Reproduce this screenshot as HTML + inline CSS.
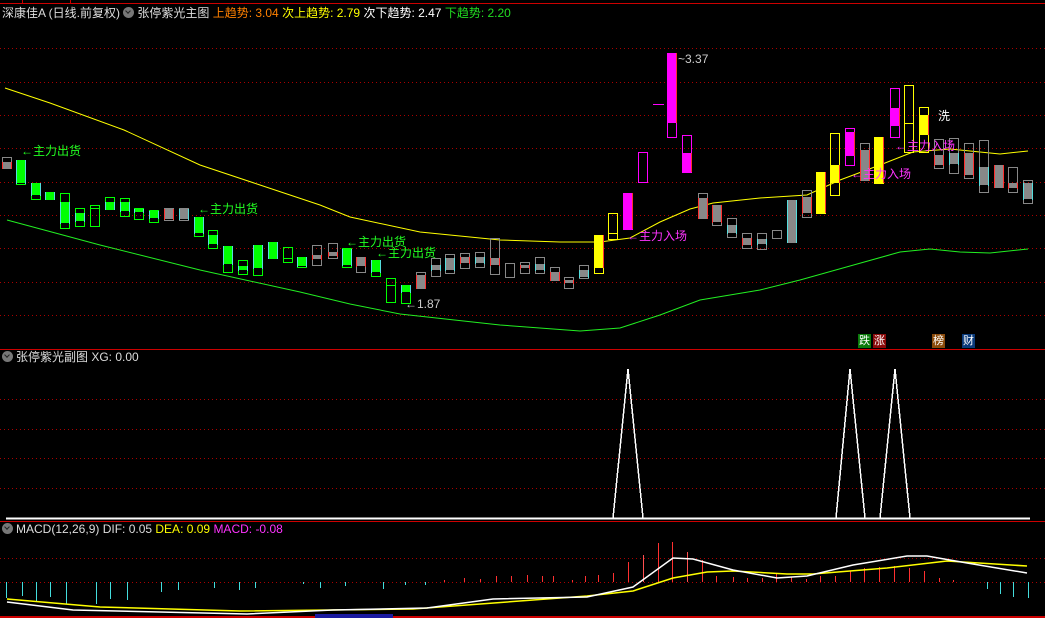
<!DOCTYPE html>
<html><head><meta charset="utf-8"><style>
html,body{margin:0;padding:0;background:#000;width:1045px;height:618px;overflow:hidden;font-family:"Liberation Sans","Noto Sans CJK SC",sans-serif}
svg{position:absolute;left:0;top:0}
.t{position:absolute;font-size:12px;white-space:nowrap;line-height:14px}
.ic{display:inline-block;width:11px;height:11px;border-radius:50%;background:#777;vertical-align:-1px;margin-right:3px;position:relative}
.ic:after{content:"";position:absolute;left:3px;top:2px;width:3px;height:3px;border-right:1.5px solid #222;border-bottom:1.5px solid #222;transform:rotate(45deg)}
.b{position:absolute;font-size:11px;line-height:14px;width:13px;height:14px;text-align:center;color:#fff}
</style></head><body>
<svg id="s" width="1045" height="618" xmlns="http://www.w3.org/2000/svg" shape-rendering="crispEdges"></svg>
<div class="t" style="left:2px;top:6px;color:#ddd">深康佳A (日线.前复权) <span class="ic"></span>张停紫光主图 <span style="color:#ff8000">上趋势: 3.04</span> <span style="color:#ffff00">次上趋势: 2.79</span> <span style="color:#fff">次下趋势: 2.47</span> <span style="color:#22dd22">下趋势: 2.20</span></div>
<div class="t" style="left:2px;top:350px;color:#ddd"><span class="ic"></span>张停紫光副图 XG: 0.00</div>
<div class="t" style="left:2px;top:522px;color:#ddd"><span class="ic"></span>MACD(12,26,9) DIF: 0.05 <span style="color:#ffff00">DEA: 0.09</span> <span style="color:#ff33ff">MACD: -0.08</span></div>
<div class="t" style="left:21px;top:144px;color:#22ff22">←主力出货</div>
<div class="t" style="left:198px;top:202px;color:#22ff22">←主力出货</div>
<div class="t" style="left:346px;top:235px;color:#22ff22">←主力出货</div>
<div class="t" style="left:376px;top:246px;color:#22ff22">←主力出货</div>
<div class="t" style="left:405px;top:297px;color:#ccc">←1.87</div>
<div class="t" style="left:678px;top:52px;color:#ccc">~3.37</div>
<div class="t" style="left:627px;top:229px;color:#ff33ff">←主力入场</div>
<div class="t" style="left:851px;top:167px;color:#ff33ff">←主力入场</div>
<div class="t" style="left:895px;top:139px;color:#ff33ff">←主力入场</div>
<div class="t" style="left:938px;top:109px;color:#fff">洗</div>
<div class="b" style="left:858px;top:334px;background:#0a7a0a">跌</div>
<div class="b" style="left:873px;top:334px;background:#8a0a0a">涨</div>
<div class="b" style="left:932px;top:334px;background:#8a4a0a">榜</div>
<div class="b" style="left:962px;top:334px;background:#0a3a7a">财</div>
<script>
var s=document.getElementById('s'),h='';
function L(x1,y1,x2,y2,c,w,d){h+='<line x1="'+x1+'" y1="'+y1+'" x2="'+x2+'" y2="'+y2+'" stroke="'+c+'" stroke-width="'+(w||1)+'"'+(d?' stroke-dasharray="'+d+'"':'')+'/>';}
function R(x,y,w,hh,f,st){h+='<rect x="'+x+'" y="'+y+'" width="'+w+'" height="'+hh+'" fill="'+f+'"'+(st?' stroke="'+st+'"':'')+'/>';}
function P(pts,c,w){h+='<polyline fill="none" stroke="'+c+'" stroke-width="'+(w||1)+'" points="'+pts.map(function(p){return p.join(',')}).join(' ')+'" shape-rendering="auto"/>';}
// frames
L(0,3.5,1045,3.5,'#c00');L(22.5,0,22.5,3,'#c00');L(70.5,0,70.5,3,'#c00');
[48,82,115,148,182,215,248,282,315].forEach(function(y){L(0,y+.5,1045,y+.5,'#a00',1,'1 3');});
L(0,349.5,1045,349.5,'#c00');
[399,429,458,488].forEach(function(y){L(0,y+.5,1045,y+.5,'#a00',1,'1 3');});
L(0,521.5,1045,521.5,'#c00');
L(0,558.5,1045,558.5,'#a00',1,'1 3');L(0,582.5,1045,582.5,'#a00',1,'1 3');
L(0,617,1045,617,'#c00',2);R(315,614,78,4,'#1a1aa0');
// MAs
P([[5,88],[50,103],[124,130],[200,165],[260,185],[320,205],[350,217],[420,232],[500,240],[560,242],[600,242],[630,238],[660,222],[690,209],[713,203],[760,198],[807,195],[840,180],[880,165],[913,152],[950,149],[980,152],[1000,154],[1028,151]],'#ffff00');
P([[7,220],[100,245],[200,270],[300,292],[350,304],[400,314],[500,325],[580,331],[620,328],[660,315],[700,300],[760,290],[800,280],[850,266],[900,252],[930,249],[960,252],[990,253],[1028,249]],'#22ee22');
// candles: x, hi, bodyTop, bodyBot, lo, type
var G='#00ff00',Y='#ffff00',M='#ff00ff',Gr='#888';
var C=[[7,157,162,168,168,'g'],[21,160,160,183,184,'G'],[36,183,183,195,199,'G'],[50,192,192,199,199,'G'],[65,193,202,223,228,'G'],[80,208,213,221,226,'G'],[95,205,208,214,226,'Gh'],[110,197,202,209,209,'G'],[125,198,202,211,216,'G'],[139,208,209,212,219,'G'],[154,210,211,218,222,'G'],[169,208,209,219,220,'g'],[184,208,209,219,220,'g'],[199,217,217,233,236,'G'],[213,230,235,244,248,'G'],[228,246,246,264,272,'G'],[243,260,266,270,274,'G'],[258,245,245,268,275,'G'],[273,242,242,258,258,'G'],[288,247,258,259,262,'Gh'],[302,257,257,266,267,'G'],[317,245,255,259,265,'g'],[333,243,252,256,258,'g'],[347,248,249,265,267,'G'],[361,257,257,266,272,'g'],[376,260,260,272,276,'G'],[391,278,285,291,302,'Gh'],[406,285,285,292,303,'G'],[421,272,275,288,288,'g'],[436,258,265,270,276,'g'],[450,254,258,270,273,'g'],[465,253,257,263,268,'g'],[480,252,257,263,267,'g'],[495,238,258,265,274,'g'],[510,263,263,277,277,'gh'],[525,262,265,268,273,'g'],[540,257,264,270,273,'g'],[555,267,272,280,280,'g'],[569,277,280,283,288,'g'],[584,265,270,277,278,'g'],
[599,235,235,268,273,'Y'],[613,213,233,239,239,'Yh'],[628,193,193,229,229,'M'],[643,152,152,182,182,'Mh'],[672,53,53,123,137,'M'],[687,135,153,172,172,'M'],[703,193,198,218,218,'g'],[717,205,205,222,225,'g'],[732,218,225,233,237,'g'],[747,233,238,245,248,'g'],[762,233,239,244,249,'g'],[777,230,230,238,238,'gh'],[792,200,200,242,242,'g'],[807,190,197,213,217,'g'],[821,172,172,213,213,'Y'],[835,133,165,183,195,'Y'],[850,128,132,156,165,'M'],[865,143,150,180,180,'g'],[879,137,137,183,183,'Y'],[895,88,108,126,137,'M'],[909,85,123,133,152,'Yh'],[924,107,115,135,152,'Y'],[939,139,155,165,168,'g'],[954,138,153,164,173,'g'],[969,143,153,175,178,'g'],[984,140,167,185,192,'g'],[999,165,165,187,187,'g'],[1013,167,183,188,192,'g'],[1028,180,183,199,203,'g']];
C.forEach(function(c){var x=c[0],t=c[5],col=t[0]=='G'?G:t[0]=='Y'?Y:t[0]=='M'?M:Gr,hol=t[1]=='h',w=10,l=x-5;
 R(l+.5,c[1]+.5,w-1,c[4]-c[1],'none',col);
 if(hol){L(l,c[2]+.5,l+w,c[2]+.5,col);}
 else{R(l,c[2],w,Math.max(2,c[3]-c[2]),col);
  var e=t[0]=='g'&&x%2?'#ff3030':'#55dddd';if(t[0]=='g'||t[0]=='G'){L(l+.5,c[2],l+.5,c[3]+1,e);L(l+w-.5,c[2],l+w-.5,c[3]+1,e);} else L(l+w-.5,c[2],l+w-.5,c[3],'#ff3030');}
});
L(653,104.5,664,104.5,M);
// XG
L(6,518.5,1030,518.5,'#fff',2);
h+='<polyline fill="none" stroke="#fff" stroke-width="1.5" points="613,518 628,369 643,518"/><polyline fill="none" stroke="#fff" stroke-width="1.5" points="836,518 850,369 865,518"/><polyline fill="none" stroke="#fff" stroke-width="1.5" points="880,518 895,369 910,518"/>';
// MACD hist
var hist=[[6,598],[22,596],[36,602],[50,597],[66,604],[96,604],[110,599],[127,600],[161,592],[178,590],[214,588],[239,590],[255,588],[303,584],[320,588],[345,586],[383,589],[405,585],[425,585],[444,580],[464,578],[480,579],[496,576],[511,576],[527,575],[542,576],[553,576],[572,580],[585,576],[598,575],[613,573],[628,562],[643,555],[658,543],[672,542],[687,552],[702,560],[716,576],[733,577],[747,578],[762,578],[776,574],[791,577],[806,579],[820,576],[835,576],[850,571],[864,568],[879,567],[894,566],[909,568],[924,571],[939,578],[953,580],[969,582],[987,589],[1000,594],[1013,597],[1028,598]];
hist.forEach(function(b){var c=b[1]<582?'#ff3030':'#44dddd';if(b[0]>640&&b[0]<700&&b[0]%2)c='#ff5050';L(b[0]+.5,582,b[0]+.5,b[1],c);});
P([[7,599],[100,607],[240,611],[413,609],[587,596],[633,591],[673,578],[707,572],[733,571],[787,574],[813,574],[887,568],[947,561],[1027,566]],'#ffff00',1.5);
P([[7,602],[73,610],[247,614],[333,610],[427,608],[493,599],[587,597],[633,587],[673,558],[693,559],[733,570],[777,578],[807,576],[853,565],[907,556],[927,556],[967,563],[1027,573]],'#fff',1.5);
s.innerHTML=h;
</script>
</body></html>
